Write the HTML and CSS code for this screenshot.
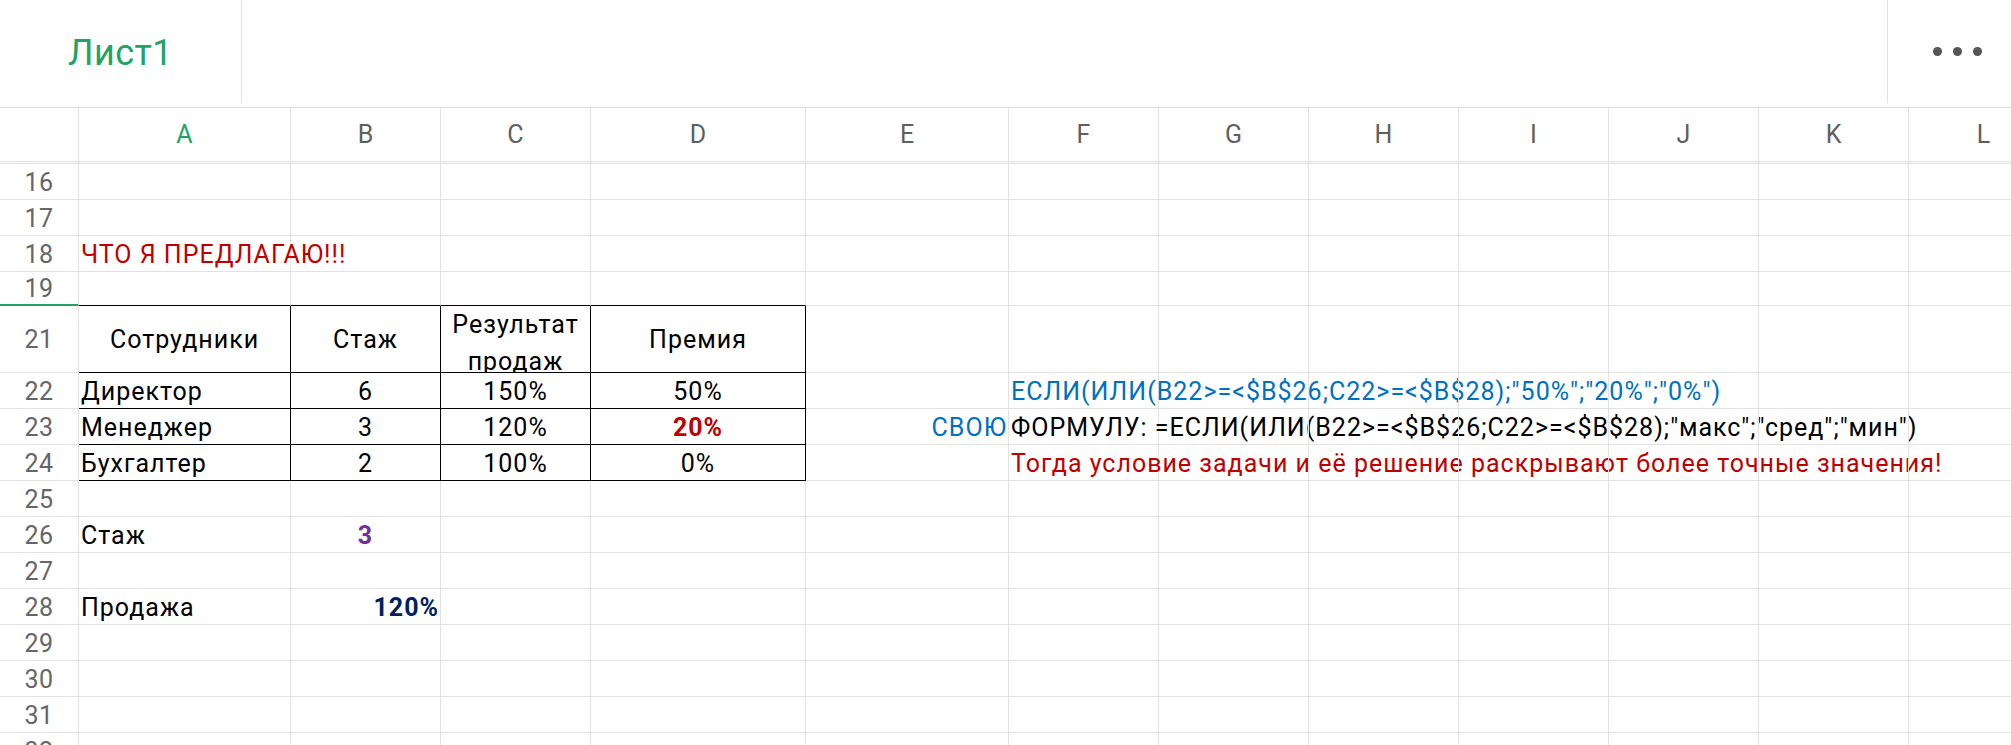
FILE: index.html
```html
<!DOCTYPE html>
<html lang="ru">
<head>
<meta charset="utf-8">
<title>Лист1</title>
<link rel="stylesheet" href="styles.css">
</head>
<body>
<div class="app">
  <header class="topbar">
    <div class="tab">Лист1</div>
    <div class="spacer"></div>
    <div class="more"><span class="dot"></span><span class="dot"></span><span class="dot"></span></div>
  </header>
  <div class="sheet">
    <div class="row head">
      <div class="rh"></div>
      <div class="ch active">A</div><div class="ch">B</div><div class="ch">C</div><div class="ch">D</div><div class="ch">E</div><div class="ch">F</div><div class="ch">G</div><div class="ch">H</div><div class="ch">I</div><div class="ch">J</div><div class="ch">K</div><div class="ch">L</div>
    </div>
    <div class="row"><div class="rh">16</div><div class="c"></div><div class="c"></div><div class="c"></div><div class="c"></div><div class="c"></div><div class="c"></div><div class="c"></div><div class="c"></div><div class="c"></div><div class="c"></div><div class="c"></div><div class="c"></div></div>
    <div class="row"><div class="rh">17</div><div class="c"></div><div class="c"></div><div class="c"></div><div class="c"></div><div class="c"></div><div class="c"></div><div class="c"></div><div class="c"></div><div class="c"></div><div class="c"></div><div class="c"></div><div class="c"></div></div>
    <div class="row"><div class="rh">18</div><div class="c"><span class="red">ЧТО Я ПРЕДЛАГАЮ!!!</span></div><div class="c"></div><div class="c"></div><div class="c"></div><div class="c"></div><div class="c"></div><div class="c"></div><div class="c"></div><div class="c"></div><div class="c"></div><div class="c"></div><div class="c"></div></div>
    <div class="row r19"><div class="rh sel">19</div><div class="c tb"></div><div class="c tb"></div><div class="c tb"></div><div class="c tb"></div><div class="c"></div><div class="c"></div><div class="c"></div><div class="c"></div><div class="c"></div><div class="c"></div><div class="c"></div><div class="c"></div></div>
    <div class="row r21"><div class="rh">21</div><div class="c t mid">Сотрудники</div><div class="c t mid">Стаж</div><div class="c t wrap">Результат продаж</div><div class="c t mid">Премия</div><div class="c"></div><div class="c"></div><div class="c"></div><div class="c"></div><div class="c"></div><div class="c"></div><div class="c"></div><div class="c"></div></div>
    <div class="row"><div class="rh">22</div><div class="c t">Директор</div><div class="c t mid">6</div><div class="c t mid">150%</div><div class="c t mid">50%</div><div class="c"></div><div class="c"><span class="blue">ЕСЛИ(ИЛИ(B22&gt;=&lt;$B$26;C22&gt;=&lt;$B$28);"50%";"20%";"0%")</span></div><div class="c"></div><div class="c"></div><div class="c"></div><div class="c"></div><div class="c"></div><div class="c"></div></div>
    <div class="row"><div class="rh">23</div><div class="c t">Менеджер</div><div class="c t mid">3</div><div class="c t mid">120%</div><div class="c t mid"><b class="red">20%</b></div><div class="c right"><span class="blue">СВОЮ</span></div><div class="c"><span>ФОРМУЛУ: =ЕСЛИ(ИЛИ(B22&gt;=&lt;$B$26;C22&gt;=&lt;$B$28);"макс";"сред";"мин")</span></div><div class="c"></div><div class="c"></div><div class="c"></div><div class="c"></div><div class="c"></div><div class="c"></div></div>
    <div class="row"><div class="rh">24</div><div class="c t">Бухгалтер</div><div class="c t mid">2</div><div class="c t mid">100%</div><div class="c t mid">0%</div><div class="c"></div><div class="c"><span class="red">Тогда условие задачи и её решение раскрывают более точные значения!</span></div><div class="c"></div><div class="c"></div><div class="c"></div><div class="c"></div><div class="c"></div><div class="c"></div></div>
    <div class="row"><div class="rh">25</div><div class="c"></div><div class="c"></div><div class="c"></div><div class="c"></div><div class="c"></div><div class="c"></div><div class="c"></div><div class="c"></div><div class="c"></div><div class="c"></div><div class="c"></div><div class="c"></div></div>
    <div class="row"><div class="rh">26</div><div class="c">Стаж</div><div class="c mid"><b class="purple">3</b></div><div class="c"></div><div class="c"></div><div class="c"></div><div class="c"></div><div class="c"></div><div class="c"></div><div class="c"></div><div class="c"></div><div class="c"></div><div class="c"></div></div>
    <div class="row"><div class="rh">27</div><div class="c"></div><div class="c"></div><div class="c"></div><div class="c"></div><div class="c"></div><div class="c"></div><div class="c"></div><div class="c"></div><div class="c"></div><div class="c"></div><div class="c"></div><div class="c"></div></div>
    <div class="row"><div class="rh">28</div><div class="c">Продажа</div><div class="c right"><b class="navy">120%</b></div><div class="c"></div><div class="c"></div><div class="c"></div><div class="c"></div><div class="c"></div><div class="c"></div><div class="c"></div><div class="c"></div><div class="c"></div><div class="c"></div></div>
    <div class="row"><div class="rh">29</div><div class="c"></div><div class="c"></div><div class="c"></div><div class="c"></div><div class="c"></div><div class="c"></div><div class="c"></div><div class="c"></div><div class="c"></div><div class="c"></div><div class="c"></div><div class="c"></div></div>
    <div class="row"><div class="rh">30</div><div class="c"></div><div class="c"></div><div class="c"></div><div class="c"></div><div class="c"></div><div class="c"></div><div class="c"></div><div class="c"></div><div class="c"></div><div class="c"></div><div class="c"></div><div class="c"></div></div>
    <div class="row"><div class="rh">31</div><div class="c"></div><div class="c"></div><div class="c"></div><div class="c"></div><div class="c"></div><div class="c"></div><div class="c"></div><div class="c"></div><div class="c"></div><div class="c"></div><div class="c"></div><div class="c"></div></div>
    <div class="row"><div class="rh">32</div><div class="c"></div><div class="c"></div><div class="c"></div><div class="c"></div><div class="c"></div><div class="c"></div><div class="c"></div><div class="c"></div><div class="c"></div><div class="c"></div><div class="c"></div><div class="c"></div></div>
  </div>
</div>
</body>
</html>
```

FILE: styles.css
```css
* { box-sizing: border-box; }
html, body { margin: 0; padding: 0; background: #fff; }
body {
  font-family: Roboto, "Noto Sans", Arial, sans-serif;
  width: 2011px;
  height: 745px;
  overflow: hidden;
}
.app { width: 2011px; overflow: hidden; }

.topbar {
  display: flex;
  height: 108px;
  border-bottom: 1px solid #dedede;
  align-items: flex-start;
}
.tab {
  width: 242px;
  height: 103px;
  border-right: 1px solid #e2e2e2;
  display: flex;
  align-items: center;
  justify-content: center;
  color: #21a366;
  font-size: 36px;
  letter-spacing: 0.5px;
  padding-top: 3px;
}
.spacer { flex: 1; }
.more {
  width: 124px;
  height: 103px;
  border-left: 1px solid #e2e2e2;
  display: flex;
  align-items: center;
  gap: 11px;
  padding-left: 45px;
}
.dot {
  width: 9px;
  height: 9px;
  border-radius: 50%;
  background: #555;
}

.sheet { width: 2058px; }
.row {
  display: grid;
  grid-template-columns: 79px 212px 150px 150px 215px 203px 150px 150px 150px 150px 150px 150px 150px;
  height: 36px;
  font-size: 25px;
}
.row.head {
  height: 56px;
  border-bottom: 3px double #dcdcdc;
}
.row.r19 { height: 34px; }
.row.r21 { height: 67px; }

.rh, .ch, .c {
  border-right: 1px solid #e2e2e2;
  border-bottom: 1px solid #e2e2e2;
  display: flex;
  align-items: center;
  white-space: nowrap;
  min-width: 0;
}
.row.head .rh, .row.head .ch { border-bottom: none; }
.ch {
  justify-content: center;
  color: #5f5f5f;
  font-size: 25px;
}
.ch.active { color: #21a366; }
.rh {
  justify-content: center;
  color: #666;
  letter-spacing: 0.5px;
  padding-top: 1px;
}
.rh.sel { border-bottom: 2px solid #21a366; }

.c {
  color: #000;
  letter-spacing: 1px;
  padding-left: 2px;
  padding-right: 3px;
  padding-top: 1px;
}
.c.mid { justify-content: center; padding-left: 0; padding-right: 0; }
.c.right { justify-content: flex-end; padding-right: 1px; }

.c.tb { border-bottom: 1px solid #000; }
.c.t { border-bottom: 1px solid #000; border-right: 1px solid #000; }
.c.wrap {
  white-space: normal;
  text-align: center;
  justify-content: center;
  align-items: flex-start;
  line-height: 37px;
  overflow: hidden;
  padding: 0;
}

.red { color: #c00000; }
.blue { color: #0070c0; }
.purple { color: #7030a0; }
.navy { color: #002060; }
b { font-weight: 700; }
```
